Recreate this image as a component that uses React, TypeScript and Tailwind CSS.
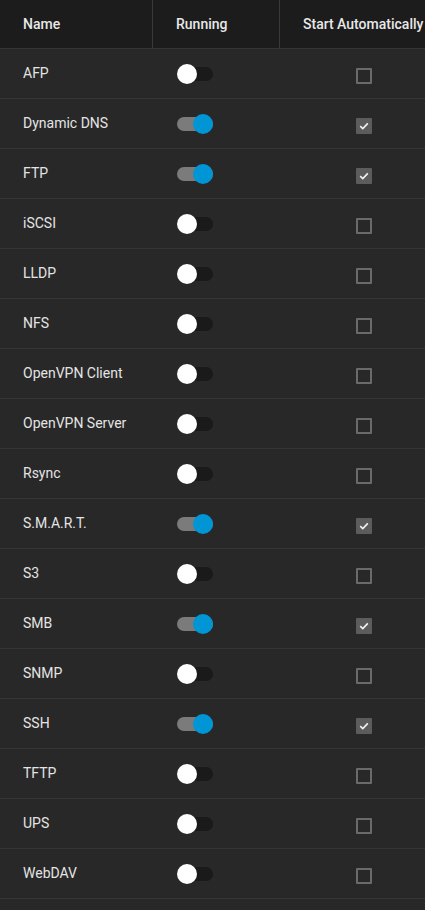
import React from "react";

const services: { name: string; running: boolean }[] = [
  { name: "AFP", running: false },
  { name: "Dynamic DNS", running: true },
  { name: "FTP", running: true },
  { name: "iSCSI", running: false },
  { name: "LLDP", running: false },
  { name: "NFS", running: false },
  { name: "OpenVPN Client", running: false },
  { name: "OpenVPN Server", running: false },
  { name: "Rsync", running: false },
  { name: "S.M.A.R.T.", running: true },
  { name: "S3", running: false },
  { name: "SMB", running: true },
  { name: "SNMP", running: false },
  { name: "SSH", running: true },
  { name: "TFTP", running: false },
  { name: "UPS", running: false },
  { name: "WebDAV", running: false },
];

function Toggle({ on }: { on: boolean }) {
  return (
    <div className="relative h-[20px] w-[36px]">
      <div
        className={`absolute left-0 top-[3px] h-[14px] w-[36px] rounded-full ${
          on ? "bg-[#7b7b7b]" : "bg-[#1a1a1a]"
        }`}
      />
      <div
        className={`absolute top-0 h-[20px] w-[20px] rounded-full ${
          on ? "left-[16px] bg-[#0095d5]" : "left-0 bg-white"
        }`}
      />
    </div>
  );
}

function Checkbox({ checked }: { checked: boolean }) {
  if (checked) {
    return (
      <div className="flex h-[16px] w-[16px] items-center justify-center rounded-[1px] bg-[#5c5c5c]">
        <svg width="12" height="12" viewBox="0 0 12 12" fill="none">
          <path d="M2.2 6.2 L4.8 8.6 L9.8 3.4" stroke="#f2f2f2" strokeWidth="1.6" />
        </svg>
      </div>
    );
  }
  return <div className="h-[16px] w-[16px] rounded-[1px] border-2 border-[#6a6a6a]" />;
}

export default function App() {
  return (
    <div
      className="h-[910px] w-[425px] overflow-hidden bg-[#282828] text-[14px]"
      style={{ fontFamily: "Roboto, 'Liberation Sans', sans-serif" }}
    >
      <div className="grid h-[48px] grid-cols-[152px_127px_1fr] bg-[#1c1c1c] font-medium text-[#e8e8e8]">
        <div className="flex items-center pl-[23px]">Name</div>
        <div className="flex items-center border-l border-[#3a3a3a] pl-[23px]">Running</div>
        <div className="flex items-center whitespace-nowrap border-l border-[#3a3a3a] pl-[23px]">
          Start Automatically
        </div>
      </div>
      <div className="border-b border-[#353535]">
        {services.map((s) => (
          <div
            key={s.name}
            className="grid h-[50px] grid-cols-[152px_127px_1fr] border-t border-[#353535] text-[#e4e4e4]"
          >
            <div className="flex items-center pl-[23px]">{s.name}</div>
            <div className="flex items-center pl-[25px]">
              <Toggle on={s.running} />
            </div>
            <div className="flex items-center pl-[77px] pt-[4px]">
              <Checkbox checked={s.running} />
            </div>
          </div>
        ))}
      </div>
    </div>
  );
}
